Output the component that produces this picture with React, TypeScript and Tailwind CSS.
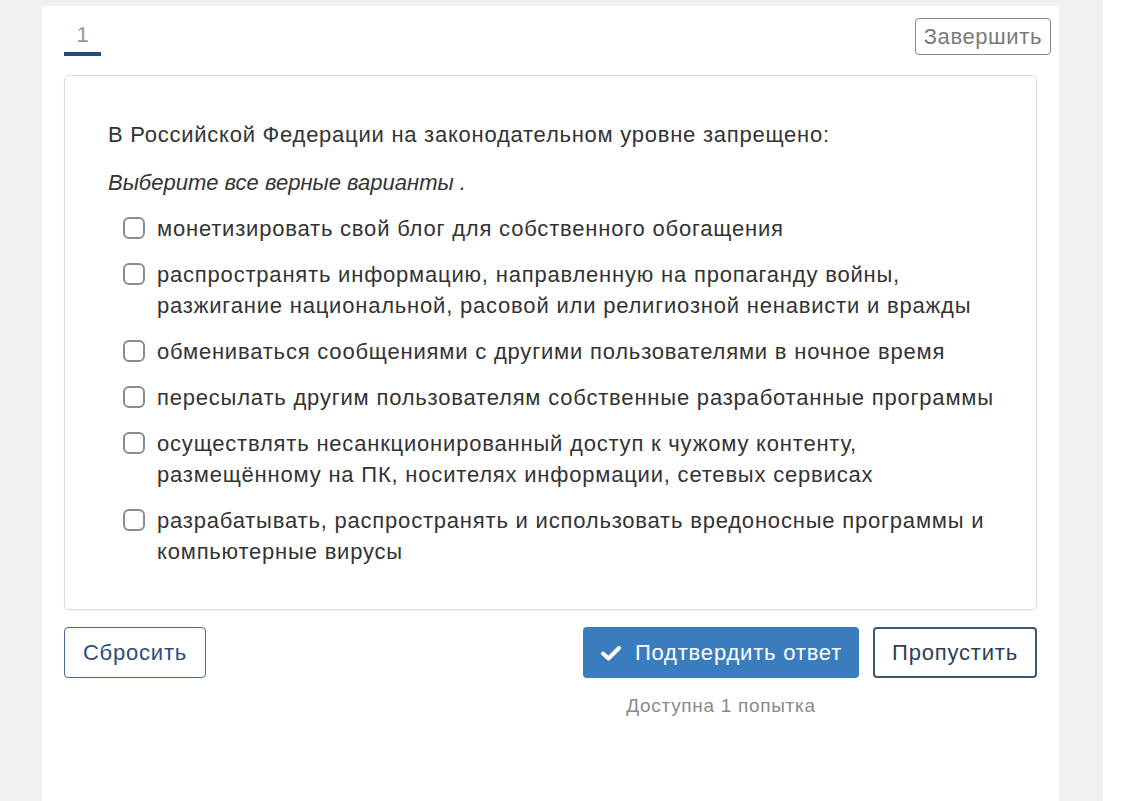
import React from "react";

const options = [
  ["монетизировать свой блог для собственного обогащения"],
  [
    "распространять информацию, направленную на пропаганду войны,",
    "разжигание национальной, расовой или религиозной ненависти и вражды",
  ],
  ["обмениваться сообщениями с другими пользователями в ночное время"],
  ["пересылать другим пользователям собственные разработанные программы"],
  [
    "осуществлять несанкционированный доступ к чужому контенту,",
    "размещённому на ПК, носителях информации, сетевых сервисах",
  ],
  [
    "разрабатывать, распространять и использовать вредоносные программы и",
    "компьютерные вирусы",
  ],
];

function CheckIcon() {
  return (
    <svg width="22" height="16" viewBox="0 0 22 16" fill="none">
      <path
        d="M3 8.5 L8.5 13.5 L19 3"
        stroke="white"
        strokeWidth="4"
        strokeLinecap="round"
        strokeLinejoin="round"
      />
    </svg>
  );
}

export default function App() {
  return (
    <div className="flex h-[801px] w-full overflow-hidden bg-[#f0f0f0] font-['Liberation_Sans',Arial,sans-serif]">
      <div className="w-[42px] shrink-0" />

      {/* main white panel */}
      <div className="mt-[6px] flex w-[1017px] shrink-0 flex-col bg-white">
        {/* header */}
        <div className="flex items-start justify-between pl-[22px] pr-[8px] pt-[12px]">
          <div className="flex w-[37px] flex-col items-center pt-[4px]">
            <span className="text-[22px] leading-[26px] text-[#999]">1</span>
            <div className="mt-[4px] h-[4px] w-full bg-[#234a86]" />
          </div>
          <button className="h-[37px] rounded-[4px] border border-[#8a8a8a] px-[8px] text-[22px] leading-none tracking-[0.6px] text-[#7a7a7a]">
            Завершить
          </button>
        </div>

        <div className="px-[22px] pt-[19px]">
          {/* question card */}
          <div className="rounded-[5px] border border-[#dedede] pb-[42px] pl-[43px] pr-[10px] pt-[44px] shadow-[0_1px_2px_rgba(0,0,0,0.06)]">
            <p className="text-[22px] leading-[30px] tracking-[0.75px] text-[#333]">
              В Российской Федерации на законодательном уровне запрещено:
            </p>
            <p className="mt-[18px] text-[22px] italic leading-[30px] text-[#333]">
              Выберите все верные варианты .
            </p>
            <div className="mt-[15px] flex flex-col gap-[15px] pl-[15px]">
              {options.map((lines, i) => (
                <label key={i} className="flex items-start gap-[12px]">
                  <span className="mt-[4px] h-[22px] w-[22px] shrink-0 rounded-[6px] border-2 border-[#8c8c8c] bg-white" />
                  <span className="whitespace-nowrap text-[22px] leading-[31px] tracking-[0.8px] text-[#333]">
                    {lines.map((l, j) => (
                      <span key={j} className="block">
                        {l}
                      </span>
                    ))}
                  </span>
                </label>
              ))}
            </div>
          </div>

          {/* actions */}
          <div className="mt-[17px] flex items-start justify-between">
            <button className="h-[51px] w-[142px] rounded-[4px] border border-[#4a689a] text-[22px] tracking-[0.8px] text-[#2b4c80]">
              Сбросить
            </button>
            <div className="flex items-start gap-[14px]">
              <div className="flex flex-col items-center">
                <button className="flex h-[51px] w-[276px] items-center justify-center gap-[13px] rounded-[4px] bg-[#3a7dbf] text-[22px] tracking-[0.8px] text-white">
                  <CheckIcon />
                  <span>Подтвердить ответ</span>
                </button>
                <span className="mt-[14px] text-[19px] tracking-[0.7px] text-[#8a8a8a]">
                  Доступна 1 попытка
                </span>
              </div>
              <button className="h-[51px] w-[164px] rounded-[4px] border-2 border-[#3f5677] text-[22px] tracking-[0.8px] text-[#2e3e58]">
                Пропустить
              </button>
            </div>
          </div>
        </div>
      </div>

      <div className="w-[44px] shrink-0" />
      <div className="flex-1 bg-white" />
    </div>
  );
}
